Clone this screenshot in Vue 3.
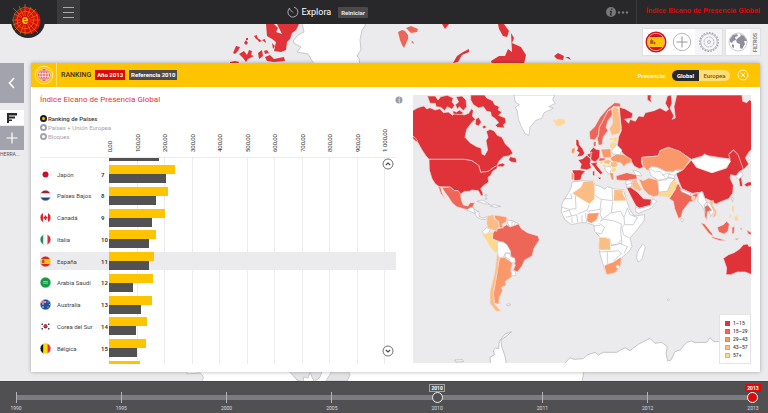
<script setup>
import { ref } from 'vue'

const scopes = ['Ranking de Países', 'Países + Unión Europea', 'Bloques']
const scope = ref(scopes[0])
const area = ref('Global')

const ticks = ['0,00', '100,00', '200,00', '300,00', '400,00', '500,00', '600,00', '700,00', '800,00', '900,00', '1 000,00']

const R = (x, y, w, h, fill) => ({ x, y, w, h, fill })
const C = (cx, cy, r, fill) => ({ cx, cy, r, fill })

const flags = {
  uk: { rects: [R(0, 0, 22, 22, '#e8383d')], dots: [] },
  jp: { rects: [R(0, 0, 22, 22, '#fff')], dots: [C(11, 11, 6, '#c8102e')] },
  nl: { rects: [R(0, 0, 22, 7, '#a51f33'), R(0, 7, 22, 8, '#fff'), R(0, 15, 22, 7, '#23468c')], dots: [] },
  ca: {
    rects: [R(0, 0, 6, 22, '#e0232e'), R(6, 0, 10, 22, '#fff'), R(16, 0, 6, 22, '#e0232e'), R(10, 7, 2, 9, '#e0232e'), R(7, 10, 8, 3, '#e0232e')],
    dots: [C(11, 11, 3, '#e0232e')]
  },
  it: { rects: [R(0, 0, 7, 22, '#1d9150'), R(7, 0, 8, 22, '#fff'), R(15, 0, 7, 22, '#d2303a')], dots: [] },
  es: { rects: [R(0, 0, 22, 6, '#d8252c'), R(0, 6, 22, 10, '#fec400'), R(0, 16, 22, 6, '#d8252c'), R(4, 9, 5, 5, '#c0552c')], dots: [C(6.5, 9, 2, '#b8432c')] },
  sa: { rects: [R(0, 0, 22, 22, '#139a43'), R(6, 8, 10, 3, '#7cc795'), R(6, 13, 10, 1, '#b4dfc2')], dots: [] },
  au: {
    rects: [R(0, 0, 22, 22, '#1d4f9c'), R(0, 4, 12, 4, '#f3c9d0'), R(4, 0, 4, 11, '#f3c9d0'), R(0, 5, 11, 2, '#dc4552'), R(5, 0, 2, 10, '#dc4552')],
    dots: [C(6, 16, 1.5, '#fff'), C(16, 6, 1, '#fff'), C(16, 16, 1, '#fff'), C(19, 11, 1, '#fff')]
  },
  kr: {
    rects: [R(0, 0, 22, 22, '#fff'), R(3, 5, 3, 3, '#444'), R(16, 5, 3, 3, '#444'), R(3, 14, 3, 3, '#444'), R(16, 14, 3, 3, '#444')],
    dots: [C(11, 11, 4, '#1f4f9e'), C(11, 9.6, 3.4, '#d22f3d')]
  },
  be: { rects: [R(0, 0, 7, 22, '#161616'), R(7, 0, 8, 22, '#fedc00'), R(15, 0, 7, 22, '#e5303a')], dots: [] }
}

const rows = [
  { rank: '', name: '', flag: 'uk', now: 275, before: 180 },
  { rank: 7, name: 'Japón', flag: 'jp', now: 241, before: 206 },
  { rank: 8, name: 'Países Bajos', flag: 'nl', now: 213, before: 169 },
  { rank: 9, name: 'Canadá', flag: 'ca', now: 204, before: 155 },
  { rank: 10, name: 'Italia', flag: 'it', now: 172, before: 144 },
  { rank: 11, name: 'España', flag: 'es', now: 165, before: 144, active: true },
  { rank: 12, name: 'Arabia Saudí', flag: 'sa', now: 159, before: 88 },
  { rank: 13, name: 'Australia', flag: 'au', now: 157, before: 117 },
  { rank: 14, name: 'Corea del Sur', flag: 'kr', now: 137, before: 99 },
  { rank: 15, name: 'Bélgica', flag: 'be', now: 134, before: 102 },
  { rank: '', name: '', flag: null, now: 114, before: 90 }
]

const barWidth = (v) => ({ width: v * 0.096 + '%' })

const legend = [
  { label: '1–15', color: '#df3339' },
  { label: '15–29', color: '#ee6658' },
  { label: '29–43', color: '#fa986a' },
  { label: '43–57', color: '#fbbd83' },
  { label: '57+', color: '#fed98c' }
]

const years = ['1990', '1995', '2000', '2005', '2010', '2011', '2012', '2013']
</script>

<template>
  <div class="app">
    <header class="topbar">
      <a class="logo" href="#" aria-label="Inicio">
        <svg viewBox="0 0 34 34">
          <circle cx="17" cy="17" r="17" fill="#29292b" />
          <circle cx="16.500" cy="17" r="13" fill="#dd0a0c" />
          <g fill="none" stroke="#d9860c" stroke-width=".6">
            <path d="M14 3 21 5 26 11 27 18 24 25 17 29 9 28 4 23 2 16 4 9 9 5Z" />
            <path d="M14 7 20 9 23 14 22 20 18 24 12 25 7 21 6 15 8 10Z" />
            <path d="M2 4 27 29M14 0V31M1 16H29M3 27 25 5M8 2 21 30M3 10 28 22M20 3 9 30M2 21 27 11" />
          </g>
          <circle cx="14" cy="16.500" r="4.500" fill="#dd0a0c" />
          <text x="14" y="20" text-anchor="middle" font-size="12" font-weight="700" fill="#fec400">e</text>
        </svg>
      </a>
      <button class="menu" type="button" aria-label="Menú"><i></i><i></i><i></i></button>
      <div class="space-left"></div>
      <svg class="explore-icon" viewBox="0 0 12 12" fill="none" stroke="#c9c9cc" stroke-width=".8">
        <path d="M3 2A5 5 0 1 0 7 1.200M2 2.500 6 6.500" />
      </svg>
      <h1>Explora</h1>
      <button class="reset" type="button">Reiniciar</button>
      <div class="space-right"></div>
      <button class="more" type="button" aria-label="Información">
        <svg viewBox="0 0 24 12">
          <circle cx="6" cy="6" r="5" fill="#77777c" />
          <path d="M6.800 2.500v1.300M5 5.300h1.300L5.600 9h1.200" fill="none" stroke="#28282a" stroke-width="1.200" />
          <g fill="#77777c"><circle cx="14" cy="6.500" r="1.200" /><circle cx="18" cy="6.500" r="1.200" /><circle cx="22" cy="6.500" r="1.200" /></g>
        </svg>
      </button>
      <div class="brand">Índice Elcano de Presencia Global</div>
    </header>

    <main class="stage">
      <svg class="backdrop" viewBox="0 24 768 357" preserveAspectRatio="xMidYMid slice">
        <g fill="#df3339">
          <path d="M233 53 236 46 240 47 238 51 235 54ZM244 43 246 40 248 43 246 45ZM246 38h2v2h-2ZM239 54 244 51 247 55 249 50 252 51 251 55 254 56 248 59 246 62 243 58ZM230 62 235 61 239 62 238 64H230ZM254 36 257 35 258 40 256 39Z" />
          <path d="M266 24 274 24 278 28 276 32 282 34 277 24H299L296 30 292 33 290 39 287 42 286 50 281 52 274 51 276 42 272 39 267 36ZM256 37 262 41 259 42ZM262 40 265 39 266 43ZM272 43 275 46 273 49ZM258 53 262 50 263 56 259 59ZM264 51 267 50 269 53 265 54ZM265 57 270 55 274 59 284 57 285 61 274 62 267 61Z" />
          <path d="M442 24 449 24 445 29ZM453 63 457 56 463 52 469 49 469 52 462 55 458 62ZM498 24H504L509 31 507 37 503 36 499 29ZM491 61 499 56 505 56 508 49 512 52 511 33 514 38 512 43 521 47 526 55 524 64H492ZM554 56 558 53 564 56 563 60 557 59ZM565 57 569 57 571 60Z" />
        </g>
        <path d="M398 32 402 30 405 31 408 35 408 39 404 48 402 45 400 40ZM406 28 411 26 418 29 417 32 411 33ZM411 42 413 41 414 44Z" fill="#ee6658" />
        <path d="M302 23 304 32 298 35 293 41 295 44 301 47 297 52 302 53 308 54 312 61 316 66H360L359 58 357 56 361 50 360 40 362 30 365 26V23Z" fill="#fff" stroke="#c8c8ce" />
        <path d="M187 371V374L200 373Q206 377 201 382H582L584 371Z" fill="#fff" stroke="#c8c8ce" />
        <path d="M289 371 297 380 304 382 303 377 308 378 310 372 314 382 320 377 322 371ZM332 371 326 381 347 381 350 375 348 371Z" fill="#e4e4e6" stroke="#c8c8ce" />
      </svg>

      <div class="tools">
        <div class="tool-group">
          <button type="button" aria-label="España">
            <svg viewBox="0 0 22 22">
              <circle cx="11" cy="11" r="10.500" fill="#cf1420" />
              <circle cx="11" cy="11" r="8.500" fill="#fec400" />
              <path d="M4 6A8.500 8.500 0 0 1 18 6ZM4 16A8.500 8.500 0 0 0 18 16Z" fill="#cf1420" />
              <circle cx="11" cy="11" r="8.700" fill="none" stroke="#f7c9cb" stroke-width=".7" />
              <path d="M5.500 9.500h2.500v3H5.500ZM6.500 8v1.500M9 11h1v2H9Z" fill="#b4542c" stroke="#b4542c" stroke-width=".7" />
            </svg>
          </button>
          <button type="button" aria-label="Añadir">
            <svg viewBox="0 0 22 22" fill="none" stroke="#96969f">
              <circle cx="11" cy="11" r="8.700" stroke-width=".7" /><path d="M11 5.500v11M5.500 11h11" />
            </svg>
          </button>
          <button class="muted" type="button" aria-label="Ajustes">
            <svg viewBox="0 0 22 22" fill="none" stroke="#a3a3ad">
              <circle cx="11" cy="11" r="9.300" stroke-width="1.300" stroke-dasharray="1.700 1.200" />
              <circle cx="11" cy="11" r="8.300" stroke-width=".7" /><circle cx="11" cy="11" r="5" stroke-width=".7" stroke-dasharray="3 .8" /><circle cx="11" cy="11" r="1.500" stroke-width=".7" />
            </svg>
          </button>
        </div>
        <div class="tool-group">
          <button class="globe" type="button" aria-label="Mundo">
            <svg viewBox="0 0 22 22">
              <circle cx="11" cy="11" r="9" fill="#fff" stroke="#b4b4bb" stroke-width=".7" />
              <path d="M3 8 6 4 10 3 11 5 8 6 9 9 6 10 5 12 3 11ZM5 13 7 14 7 17 5 16ZM11 7 14 5 13 3 17 5 20 10 17 10 18 13 15 18 13 17 13 13 10 12 9 9Z" fill="#8f8f99" />
            </svg>
          </button>
          <button class="filters" type="button"><span>FILTROS</span></button>
        </div>
      </div>

      <div class="workspace">
        <nav class="rail">
          <button class="back" type="button" aria-label="Atrás">
            <svg viewBox="0 0 24 40" fill="none" stroke="#fff" stroke-width="1.600"><path d="M14 15 9.500 20l4.500 5" /></svg>
          </button>
          <button class="chart-tool" type="button" aria-label="Ranking">
            <svg viewBox="0 0 24 15" fill="#29292b"><path d="M7 3h10v2.500H7ZM7 6.500h8v2H7ZM7 9.500h5v1.500H7ZM7 3h2v10H7Z" /></svg>
          </button>
          <button class="add" type="button" aria-label="Añadir herramienta">
            <svg viewBox="0 0 24 24" fill="none" stroke="#fff" stroke-width="1.200"><path d="M12 6.500v11M6.500 12h11" /></svg>
          </button>
          <span>HERRA...</span>
        </nav>

        <section class="panel">
          <header class="panel-head">
            <div class="emblem">
              <svg viewBox="0 0 20 20" fill="none">
                <circle cx="10" cy="10" r="8.800" stroke="#fff3c9" stroke-width=".8" />
                <circle cx="10" cy="10" r="6.500" fill="#fff" />
                <path d="M10 4.500V15.500M4.500 10h11M5.500 7h9M5.500 13h9M10 4.500C6 7 6 13 10 15.500M10 4.500C14 7 14 13 10 15.500M10 4.500a5.500 5.500 0 1 0 .1 0" stroke="#e04a4e" stroke-width=".8" />
              </svg>
            </div>
            <h2>RANKING</h2>
            <span class="badge red">Año 2013</span>
            <span class="badge">Referencia 2010</span>
            <span class="presence">Presencia:</span>
            <div class="segment">
              <button v-for="a in ['Global', 'Europea']" :key="a" type="button" :class="{ on: area === a }" @click="area = a">{{ a }}</button>
            </div>
            <button class="close" type="button" aria-label="Cerrar">
              <svg viewBox="0 0 12 12" fill="none" stroke="#fff"><circle cx="6" cy="6" r="5" stroke-width=".8" /><path d="M4 4l4 4M8 4 4 8" /></svg>
            </button>
          </header>

          <div class="panel-body">
            <section class="ranking">
              <div class="title">
                <h3>Índice Elcano de Presencia Global</h3>
                <button type="button" aria-label="Más información">
                  <svg viewBox="0 0 8 8"><circle cx="4" cy="4" r="3.500" fill="#9d9da8" /><path d="M4.500 1.500v1M3.600 3.500h.8L4 6.200h.7" fill="none" stroke="#fff" stroke-width=".7" /></svg>
                </button>
              </div>

              <div class="controls">
                <fieldset>
                  <label v-for="s in scopes" :key="s" :class="{ on: scope === s }">
                    <input v-model="scope" type="radio" name="scope" :value="s" />{{ s }}
                  </label>
                </fieldset>
                <div class="axis">
                  <span v-for="t in ticks" :key="t"><b>{{ t }}</b></span>
                </div>
              </div>

              <div class="chart">
                <div class="gridlines"><i v-for="t in ticks" :key="t"></i></div>
                <ol class="rows">
                  <li v-for="(r, n) in rows" :key="n">
                    <div class="row" :class="{ active: r.active }">
                      <svg class="flag" viewBox="0 0 22 22">
                        <template v-if="r.flag">
                          <clipPath :id="'flag-' + r.flag"><circle cx="11" cy="11" r="10.500" /></clipPath>
                          <g :clip-path="`url(#flag-${r.flag})`">
                            <rect v-for="(q, i) in flags[r.flag].rects" :key="i" :x="q.x" :y="q.y" :width="q.w" :height="q.h" :fill="q.fill" />
                            <circle v-for="(q, i) in flags[r.flag].dots" :key="'d' + i" :cx="q.cx" :cy="q.cy" :r="q.r" :fill="q.fill" />
                          </g>
                          <circle cx="11" cy="11" r="10.500" fill="none" stroke="#d8d8dc" stroke-width=".8" />
                        </template>
                      </svg>
                      <span class="name">{{ r.name }}</span>
                      <span class="rank">{{ r.rank }}</span>
                      <div class="bars">
                        <i class="now" :style="barWidth(r.now)"></i>
                        <i class="before" :style="barWidth(r.before)"></i>
                      </div>
                    </div>
                  </li>
                </ol>
                <button class="scroll up" type="button" aria-label="Subir">
                  <svg viewBox="0 0 12 12" fill="#fff" stroke="#4a4a4d"><circle cx="6" cy="6" r="5" stroke-width=".8" /><path d="M3.800 7 6 5l2.200 2" fill="none" stroke-width="1.100" /></svg>
                </button>
                <button class="scroll down" type="button" aria-label="Bajar">
                  <svg viewBox="0 0 12 12" fill="#fff" stroke="#4a4a4d"><circle cx="6" cy="6" r="5" stroke-width=".8" /><path d="M3.800 5 6 7l2.200-2" fill="none" stroke-width="1.100" /></svg>
                </button>
              </div>
            </section>

            <section class="map">
              <svg viewBox="9 15 1014 804" stroke-linejoin="round">
                <rect x="9" y="15" width="1014" height="804" fill="#ebebed" />

                <!-- The Americas and Greenland -->
                <g stroke="#f6dcdc" stroke-width="2">
                  <g fill="#df3339">
                    <path d="M5 64 20 55 30 51 42 48 50 57 60 53 75 60 90 56 100 68 115 66 128 76 136 66 150 70 162 75 176 70 184 56 190 62 187 78 196 88 185 98 170 118 165 142 180 158 200 170 213 174 216 192 224 196 233 180 228 152 234 142 229 124 240 118 252 122 262 136 276 142 286 162 300 175 309 190 296 198 280 200 268 212 262 224 278 219 286 225 278 230 254 230 235 244 212 247 206 226 185 212 162 208 57 208 48 198 36 180 24 158 14 145 5 142Z" />
                    <path d="M57 208H162L185 212 206 226 212 247 235 244 254 230 264 226 260 236 248 244 242 256 234 262 236 276 222 286 212 296 218 308 219 318 213 317 205 302 186 300 178 304 164 304 152 312 144 302 134 302 120 291 88 290 76 282 66 266 58 240Z" />
                    <path d="M52 18H76L84 30 92 20 112 16 130 24 126 36 134 46 126 58 112 50 104 62 92 52 78 50 76 40 60 40ZM138 20 156 18 168 30 170 50 160 62 148 50 142 58 136 44 146 36ZM128 62 140 66 148 60 162 70 150 74 130 72Z" />
                    <path d="M182 15H224L230 24 248 32 254 44 268 50 264 60 276 66 266 76 286 84 288 98 280 104 284 114 262 112 256 106 266 98 256 86 244 78 242 66 230 64 220 50 206 54 190 44 182 30ZM197 88 206 82 214 96 206 108 196 104ZM216 110 224 106 230 112 222 116ZM300 200 318 204 320 218 304 216 296 210Z" />
                    <path d="M9 138 22 150 20 156 9 146Z" />
                  </g>
                  <path d="M96 293 120 291 134 302 144 302 152 312 154 330 160 345 174 348 180 338 194 338 188 352 176 360 160 356 140 350 126 338 116 322 104 306ZM85 290 92 292 96 308 104 328 92 310Z" fill="#ee6658" />
                  <g fill="#fff" stroke="#b9b9c0">
                    <path d="M312 15 316 36 328 44 316 52 322 64 326 90 336 114 346 132 357 136 360 112 376 92 396 84 402 68 420 60 430 54 416 50 436 40 428 30 434 15Z" />
                    <path d="M170 360 182 352 190 352 192 358 206 364 208 380 220 384 232 380 230 388 214 388 202 382 194 370ZM202 334 216 330 232 338 240 344 220 340ZM240 348 254 344 272 349 256 352ZM290 390 306 392 324 400 318 411 298 411ZM217 425 230 413 242 418 236 428 224 436ZM225 314h6v4h-6ZM226 324h4v4h-4Z" />
                    <path d="M190 352 196 372M206 364 194 368M306 392V411M316 398 312 411" fill="none" />
                  </g>
                  <path d="M430 88 438 92 446 86 462 88 467 98 450 108 434 104 438 98 430 96Z" fill="#fed98c" />
                  <path d="M262 416 274 414 290 404 300 411 326 402 334 416 352 428 384 438 388 450 372 474 366 498 344 510 336 528 322 546 310 540 316 526 304 504 300 482 290 464 262 452 248 448 246 430Z" fill="#ee6658" />
                  <path d="M217 434 236 428 250 426 247 446 262 454 262 484 256 488 240 470 228 448Z" fill="#fed98c" />
                  <path d="M232 378 250 374 254 388 266 394 268 412 262 416 260 424 234 414 230 400Z" fill="#fbbd83" />
                  <path d="M252 376 268 377 292 382 288 396 276 402 280 414 268 412 266 394 256 388Z" fill="#fa986a" />
                  <path d="M262 454 280 456 290 464 302 484 300 490 286 488 280 502 266 502 262 484ZM286 490 300 490 302 500 314 504 316 518 302 518 298 508 286 500ZM302 538 316 546 318 556 306 558Z" fill="#fff" stroke="#c8c8ce" />
                  <path d="M268 504 284 502 308 520 302 538 306 560 286 574 288 586 274 592 278 602 268 622 266 642 252 640 250 610 258 566Z" fill="#fa986a" />
                  <path d="M262 488 268 504 258 566 250 610 254 642 274 664 258 664 240 640 240 606 254 550Z" fill="#fbbd83" />
                  <path d="M290 642h11l-2 5h-8Z" fill="#fff" stroke="#b9b9c0" />
                </g>

                <!-- Antarctica -->
                <g fill="#fff" stroke="#b9b9c0" stroke-width="2.500">
                  <path d="M305 725 285 732 268 754 266 776 256 774 250 782 254 794 240 802 242 825H290L284 795 275 770 273 750 290 738ZM134 810 158 809 160 815 138 816Z" />
                  <path d="M460 825 480 803 492 808 520 806 532 795 555 787 565 795 580 787 620 787 645 773 660 782 685 763 720 745 735 760 755 757 772 770 768 790 773 813 783 810 795 785 810 780 830 757 845 753 855 758 890 757 900 743 912 755 1030 755V825Z" />
                </g>

                <!-- Asia, northern Europe and Oceania -->
                <g transform="translate(510 0)" stroke="#f6dcdc" stroke-width="2">
                  <g fill="#df3339">
                    <path d="M118 52 134 56 158 70 156 84 134 88 146 100 150 88 166 94 176 78 190 80 196 68 222 62 240 54 258 64 266 58 256 40 262 18 274 15 276 40 270 54 282 78 276 88 286 84 282 50 290 15H486L488 34 500 38 508 30 520 34V175L508 184 496 204 506 222 490 240 478 222 474 194 460 180 448 190 450 206 440 206 376 196 334 208 322 200 300 186 265 172 240 182 235 198 186 202 184 216 190 232 178 236 162 228 152 210 130 192 112 166 116 140 124 122Z" />
                    <path d="M288 250 308 240 334 210 350 232 396 248 440 234 450 214 450 206 446 194 460 180 474 194 490 238 476 246 470 258 452 254 450 264 460 286 458 310 446 326 420 336 408 342 392 332 374 324 368 306 336 310 306 296 298 278Z" />
                    <path d="M202 15H214L212 28 216 38 202 30ZM140 294 152 292 172 306 190 326 214 328 212 346 178 354 168 348 154 322ZM476 264 484 262 488 288 480 290ZM492 284 504 276 520 276V284L500 290Z" />
                    <path d="M430 505 446 494 462 488 478 478 490 464 503 462 507 470 520 466V556L496 546 472 546 452 554 438 554 440 534Z" />
                  </g>
                  <g fill="#ee6658">
                    <path d="M28 126 44 110 60 82 84 54 104 38 120 40 122 50 100 50 84 64 70 90 58 112 56 134 44 150 30 148Z" />
                    <path d="M56 134 58 112 70 90 84 62 96 58 98 74 84 92 78 112 84 122 70 140 66 164 56 166 52 146Z" />
                    <path d="M108 258 140 248 168 254 172 266 140 272 110 270ZM286 282 296 282 306 302 334 318 344 312 356 308 352 318 344 332 328 336 308 362 304 380 296 386 284 356 280 334 268 326 286 298ZM374 350 384 344 394 352 396 362 382 366 380 392 374 378Z" />
                    <path d="M362 398 374 402 396 430 400 440 386 430ZM412 412 430 404 440 394 448 402 444 424 432 432 416 426ZM456 412 464 410 462 430 456 432ZM480 414 486 414 484 422ZM500 420 520 430V436L504 432ZM396 440 420 446 440 452 420 452 396 444ZM462 448 476 444 472 450Z" />
                  </g>
                  <g fill="#fa986a">
                    <path d="M186 202 235 198 240 182 265 172 300 184 330 208 322 222 308 240 286 240 280 246 256 244 232 232 214 230 212 242 200 240 188 226Z" />
                    <path d="M90 204 110 192 130 194 154 208 152 218 138 222 132 230 122 218 98 216ZM176 266 190 272 206 264 232 270 236 290 240 316 222 320 206 314 190 298ZM62 180 92 176 94 202 70 202Z" />
                  </g>
                  <path d="M96 58 106 50 116 58 118 80 124 112 118 130 96 136 88 118 98 100ZM158 272 168 268 186 300 178 304 156 292ZM388 334 400 332 398 346 410 364 408 378 396 384 404 366 390 346ZM100 298 130 298 140 333 100 333Z" fill="#fbbd83" />
                  <path d="M98 144 112 142 110 156 96 154ZM90 160 108 156 110 174 90 176ZM236 308 262 304 274 278 284 268 292 282 284 300 268 322 236 318ZM336 318 346 320 342 334 334 328ZM456 346 462 350 462 366 456 362ZM462 382 472 376 476 392 466 392ZM450 372 456 378 448 386Z" fill="#fed98c" />
                  <g fill="#fff" stroke="#bcbcc4">
                    <path d="M334 210 360 204 374 192 392 202 440 206 452 214 436 234 396 248 350 232Z" stroke="#f6dcdc" />
                    <path d="M94 182 110 164 126 180 120 194 98 192ZM206 236 214 230 232 232 256 244 280 246 286 240 302 244 286 252 282 266 264 262 258 270 234 270 214 258ZM234 272 264 264 286 266 272 280 262 304 236 306ZM166 352 178 356 212 346 218 326 230 334 214 354 176 370 168 366ZM300 298 334 310 330 316 306 306ZM354 312 366 304 374 324 380 336 372 344 376 368 366 348 354 334ZM380 336 390 340 402 364 392 380 388 362 396 362 384 346ZM158 240 178 246 186 258 168 256ZM466 258 484 244 490 256 476 268ZM304 384 310 388 308 396 302 392ZM454 324 460 322 458 336ZM140 272 158 270 154 290 140 292Z" />
                    <path d="M212 238 226 246 240 244 256 262M246 256 262 250 282 256M262 262 270 250" fill="none" />
                    <circle cx="265" cy="629" r="3" />
                  </g>
                </g>

                <!-- Europe and Africa -->
                <g transform="translate(420 120)" stroke="#fff" stroke-width="1.500">
                  <g fill="#fff" stroke="#b9b9c0" stroke-width="2">
                    <path d="M66 156 90 153 130 151 134 164 152 170 164 178 172 170 192 177 220 180 230 212 238 236 252 258 284 254 282 272 256 306 240 324 246 350 236 366 216 382 212 408 196 428 170 434 162 412 150 372 146 346 150 322 134 304 132 286 110 278 92 278 64 284 44 268 34 246 36 222 44 206 56 188 64 172Z" />
                    <path d="M262 366 278 342 286 350 276 388 264 396 260 384Z" />
                    <path d="M44 206H66L62 190M76 194 78 236 58 238 36 232M40 246 58 240 64 258 48 262M64 258 80 254 84 278M66 262V280M84 252 112 240 118 222M96 256V278M106 248 110 276M134 196V160M134 196 154 208 150 238 112 244M154 208 188 212 186 176M188 214 184 248 156 268 150 250 154 236M184 248 212 244 222 262 232 234 240 254 262 262 250 284 224 284 222 262M222 284 216 292 220 314 238 324M150 274 160 268 190 272 214 282 212 306 216 340 184 346 180 326 148 322M148 280 164 292 154 312 138 308M132 288 150 286M184 346 202 344 214 330M208 340 232 350 222 370M148 366 186 364 206 362 216 374M172 366 172 402M190 394 214 370" fill="none" stroke-width="2" />
                    <path d="M164 112 180 108 184 118 178 134 166 120ZM228 152 240 150 246 160 228 164Z" />
                  </g>
                  <path d="M100 154 130 152 134 168 134 206 118 222 92 206 66 190 92 172ZM192 178 220 181 218 190 230 212 190 213ZM147 322 166 322 180 328 182 360 146 360Z" fill="#fbbd83" />
                  <path d="M112 250 148 248 140 270 124 280 110 274ZM162 408 172 402 190 396 214 380 212 406 196 428 170 434Z" fill="#fa986a" />
                  <circle cx="203" cy="410" r="4" fill="#fff" />
                  <g fill="#df3339">
                    <path d="M78 28 86 30 88 44 98 56 104 70 96 78 80 80 88 68 80 62 84 54 78 44ZM84 90 98 86 110 76 124 88 120 100 124 114 110 120 90 116 94 102ZM66 120 92 120 106 124 96 134 92 150 72 152 70 132ZM110 74 126 66 122 86ZM120 64 130 52 138 58 150 60 148 84 136 96 122 90ZM122 100 142 96 140 106 158 128 152 134 138 120 130 108ZM128 124 134 122 134 138 128 136ZM142 142 154 142 150 150Z" />
                  </g>
                  <path d="M64 56 76 52 74 68 64 72ZM64 126 72 132 71 150 64 150ZM152 58 182 56 184 82 160 84ZM178 128 190 128 192 150 184 150Z" fill="#fa986a" />
                  <path d="M130 36 138 34 138 48 130 50ZM148 84 166 84 164 92 146 94Z" fill="#ee6658" />
                  <path d="M160 92 176 88 184 94 176 104 162 100ZM184 94 200 96 204 108 190 114 180 106Z" fill="#fbbd83" />
                  <path d="M148 94 160 94 158 104 146 100ZM182 114 200 112 200 124 186 128ZM176 22 190 22 190 32 178 32ZM160 102 174 106 164 112 154 106Z" fill="#fed98c" />
                </g>
              </svg>
              <ul class="legend">
                <li v-for="l in legend" :key="l.label"><i :style="{ background: l.color }"></i>{{ l.label }}</li>
              </ul>
            </section>
          </div>
        </section>
      </div>
    </main>

    <footer class="timeline">
      <div class="track"></div>
      <ol class="years">
        <li v-for="y in years" :key="y" :class="{ reference: y === '2010', current: y === '2013' }">
          <button type="button">
            <span class="tag">{{ y === '2010' || y === '2013' ? y : '' }}</span>
            <i class="mark"></i>
            <span class="year">{{ y }}</span>
          </button>
        </li>
      </ol>
    </footer>
  </div>
</template>

<style>
body { margin: 0; background: #ebebed; }
</style>

<style scoped>
.app { min-height: 100vh; display: flex; flex-direction: column; font-family: Roboto, "Liberation Sans", sans-serif; font-size: 6px; color: #444447; overflow: hidden; }
.app * { box-sizing: border-box; }
button { appearance: none; margin: 0; padding: 0; border: 0; background: none; font: inherit; color: inherit; display: flex; align-items: center; justify-content: center; cursor: pointer; }
svg { display: block; }
h1, h2, h3, ol, ul { margin: 0; padding: 0; list-style: none; }

.topbar { position: relative; z-index: 2; height: 24px; display: flex; align-items: center; background: #28282a; color: #fff; padding-left: 57px; }
.logo { position: absolute; left: 11px; top: 4px; width: 34px; }
.menu { width: 23px; height: 24px; background: #3b3b3d; flex-direction: column; gap: 4px; }
.menu i { width: 11px; height: 1px; background: #a9a9ad; }
.space-left { flex: 7; }
.space-right { flex: 8; }
.explore-icon { width: 12px; margin-right: 2px; }
h1 { font-size: 9px; font-weight: 400; line-height: 12px; }
.reset { margin-left: 7px; height: 11px; padding: 0 3px; background: #4a4a4d; color: #e6e6e8; font-size: 6px; font-weight: 700; border-radius: 1px; }
.more { width: 24px; margin-right: 7px; }
.more svg { width: 24px; }
.brand { border-left: 1px solid #3b3b3d; height: 24px; line-height: 22px; padding: 0 8px 0 9px; color: #dd0a0c; font-family: "Liberation Sans", sans-serif; font-size: 7px; font-weight: 700; }

.stage { position: relative; flex: 1; background: #ebebed; padding: 5px 0 9px; }
.backdrop { position: absolute; inset: 0; width: 100%; height: 100%; }
.tools { position: relative; display: flex; justify-content: flex-end; gap: 4px; padding-right: 8px; height: 26px; }
.tool-group { display: flex; background: #fff; box-shadow: 0 0 1px 1px #e0e0e3; }
.tool-group button { width: 26px; }
.tool-group svg { width: 22px; }
.tool-group .muted { width: 27px; background: #f5f5f7; }
.tool-group .globe { width: 24px; }
.tool-group .filters { width: 10px; background: #f5f5f7; color: #6d6d73; font-size: 5px; font-weight: 500; }
.filters span, .axis b { writing-mode: vertical-rl; transform: rotate(180deg); white-space: nowrap; }

.workspace { position: relative; display: flex; gap: 7px; margin-top: 8px; padding-right: 8px; }
.rail { width: 24px; display: flex; flex-direction: column; align-items: stretch; }
.rail button { background: #a3a3ad; }
.rail svg { width: 24px; }
.rail .back { height: 40px; margin-bottom: 7px; }
.rail .chart-tool { height: 15px; background: #fff; margin-bottom: 1px; }
.rail .add { height: 24px; }
.rail span { font-size: 5px; line-height: 9px; white-space: nowrap; color: #55555a; }

.panel { flex: 1; min-width: 0; background: #fff; box-shadow: 0 0 4px rgba(0, 0, 0, .3); }
.panel-head { height: 24px; display: flex; align-items: center; background: #fec400; padding-right: 11px; }
.emblem { width: 26px; height: 24px; display: flex; align-items: center; justify-content: center; border-right: 1px solid #ffdc66; margin-right: 4px; }
.emblem svg { width: 20px; }
h2 { font-size: 7px; font-weight: 500; color: #3a3320; margin-right: 4px; }
.badge { height: 10px; line-height: 10px; padding: 0 2px; background: #4c4c50; color: #fff; font-weight: 700; margin-right: 4px; }
.badge.red { background: #dd0a0c; }
.presence { margin-left: auto; color: #fff; font-weight: 500; margin-right: 6px; }
.segment { display: flex; height: 11px; border-radius: 6px; overflow: hidden; background: #ffdf73; }
.segment button { width: 31px; color: #6b5a20; font-weight: 500; }
.segment button.on { width: 27px; background: #28282a; color: #fff; font-weight: 700; }
.close { margin-left: 7px; }
.close svg { width: 12px; }

.panel-body { display: grid; grid-template-columns: 382fr 347fr; padding: 8px 0; }
.ranking { padding: 0 10px 0 9px; min-width: 0; }
.title { display: flex; justify-content: space-between; align-items: center; height: 10px; margin-bottom: 9px; }
h3 { font-size: 8px; line-height: 10px; font-weight: 400; color: #df3339; }
.title svg { width: 8px; }
.controls { display: grid; grid-template-columns: 69px 1fr; height: 43px; margin-right: 7px; }
fieldset { border: 0; margin: 0; padding: 0; min-width: 0; }
label { display: flex; align-items: center; gap: 1px; height: 9px; white-space: nowrap; color: #a3a3ad; }
label.on { color: #333336; font-weight: 500; }
input { appearance: none; flex: none; margin: 0; width: 7px; height: 7px; border-radius: 50%; border: 2px solid #a3a3ad; background: #fff; }
input:checked { background: #fec400; border-color: #1d1d1f; }
.axis { display: flex; align-items: flex-end; padding-bottom: 5px; color: #333336; }
.axis span { flex: 0 0 9.6%; }
.axis b { display: block; width: 8px; line-height: 8px; margin-left: -3px; font-weight: 400; }

.chart { position: relative; display: grid; height: 207px; margin-right: 7px; border-top: 1px solid #ececee; overflow: hidden; }
.gridlines { grid-area: 1 / 1; display: flex; margin-left: 69px; }
.gridlines i { flex: 0 0 9.6%; border-left: 1px solid #ececef; }
.rows { grid-area: 1 / 1; display: grid; grid-template-rows: 7px repeat(9, minmax(0, 1fr)) 3px; }
.rows li { display: flex; align-items: flex-start; min-height: 0; overflow: hidden; }
.rows li:first-child { align-items: flex-end; padding-bottom: 4px; }
.row { flex: 1; height: 18px; display: grid; grid-template-columns: 11px 6px 44px 8px 1fr; align-items: center; }
.row.active { background: #ebebed; }
.flag { width: 11px; }
.name { grid-column: 3; }
.rank { font-weight: 700; white-space: nowrap; }
.bars { display: flex; flex-direction: column; }
.bars i { height: 9px; }
.now { background: #fec400; }
.before { background: #525255; }
.scroll { position: absolute; right: 2px; }
.scroll svg { width: 12px; }
.scroll.up { top: 0; }
.scroll.down { bottom: 7px; }

.map { position: relative; padding-right: 9px; }
.map > svg { width: 100%; }
.legend { position: absolute; right: 9px; bottom: 0; width: 32px; padding: 4px 0 4px 5px; background: #fff; border: 1px solid #e4e4e7; font-size: 5px; font-weight: 500; }
.legend li { display: flex; align-items: center; gap: 3px; height: 8px; }
.legend i { width: 5px; height: 5px; border: 1px solid rgba(110, 110, 120, .3); }

.timeline { position: relative; display: grid; height: 32px; background: #505053; border-top: 1px solid #454548; }
.track { grid-area: 1 / 1; height: 5px; margin: 13px 13px 0 16px; background: #7b7b80; }
.years { grid-area: 1 / 1; display: flex; justify-content: space-between; padding: 2px 0 0 1px; }
.years li { width: 30px; }
.years button { width: 30px; flex-direction: column; color: #dcdce0; font-size: 5px; }
.tag { height: 8px; line-height: 6px; padding: 0 1px; border: 1px solid transparent; color: #fff; font-weight: 700; }
.mark { width: 1px; height: 11px; margin: 0 0 1px; background: #b4b4b8; }
.year { line-height: 8px; }
.reference .tag { border-color: #a3a3a8; }
.reference .mark { width: 11px; border: 1px solid #f2f2f3; border-radius: 50%; background: #505053; }
.current .tag { background: #dd0a0c; }
.current .mark { width: 11px; border: 1px solid #fff; border-radius: 50%; background: #dd0a0c; }
</style>
